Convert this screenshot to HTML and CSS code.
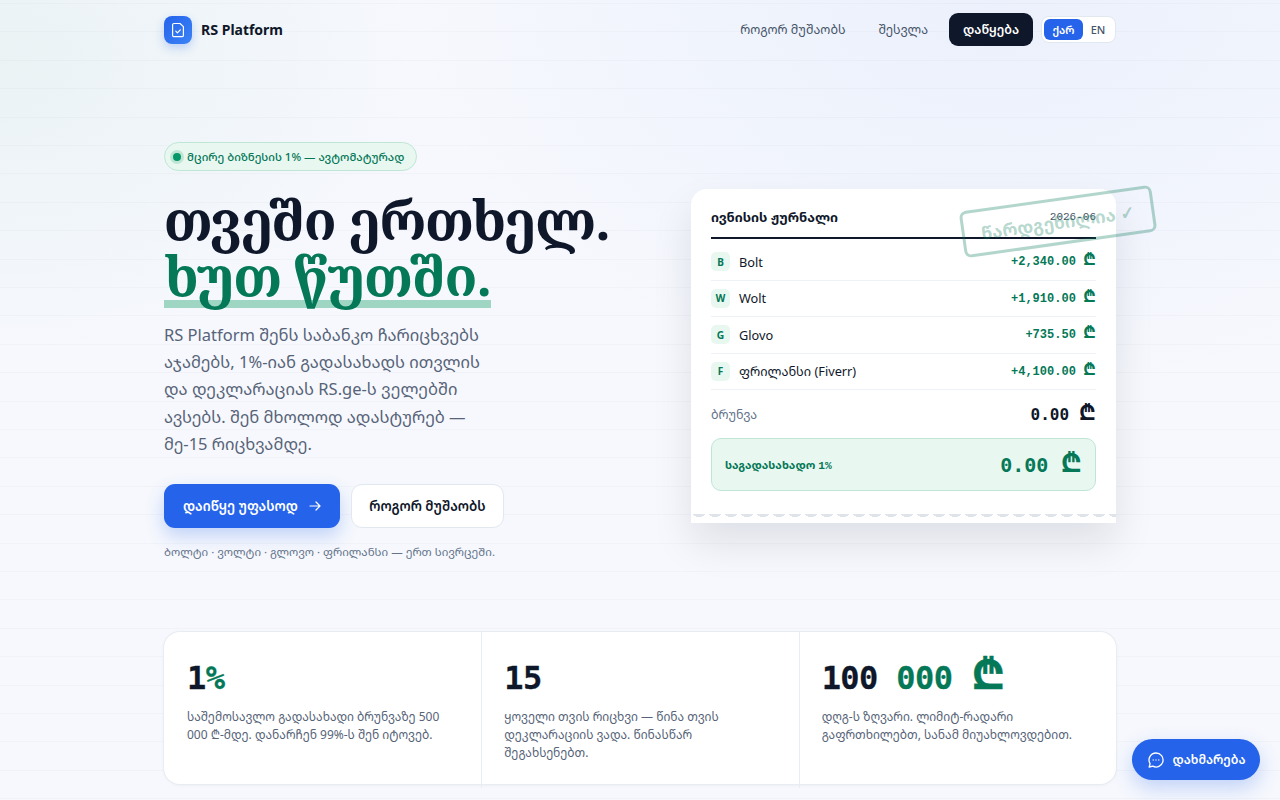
FILE: index.html
```html
<!DOCTYPE html>
<html lang="ka">
<head>
<meta charset="utf-8">
<title>RS Platform</title>
<link rel="stylesheet" href="styles.css">
</head>
<body>
<div class="page">
  <header class="nav">
    <a class="brand">
      <span class="logo"><svg width="14" height="16" viewBox="0 0 14 16" fill="none" stroke="#fff" stroke-width="1.2" stroke-linecap="round" stroke-linejoin="round"><path d="M3 1.5h6L12.4 4.6v9a1 1 0 0 1-1 1H2.6a1 1 0 0 1-1-1V2.8A1.3 1.3 0 0 1 3 1.5z"/><path d="M4.8 9.2l1.6 1.6 2.9-3"/></svg></span>
      <span class="brand-name">RS Platform</span>
    </a>
    <nav class="nav-right">
      <a class="nav-link">როგორ მუშაობს</a>
      <a class="nav-link">შესვლა</a>
      <a class="nav-cta">დაწყება</a>
      <div class="lang"><span class="lang-on">ქარ</span><span class="lang-off">EN</span></div>
    </nav>
  </header>

  <section class="hero">
    <div class="hero-left">
      <div class="eyebrow"><span class="dot"></span>მცირე ბიზნესის 1% — ავტომატურად</div>
      <h1>თვეში ერთხელ.<br><span class="accent">ხუთ წუთში.</span></h1>
      <p class="lead">RS Platform შენს საბანკო ჩარიცხვებს აჯამებს, 1%-იან გადასახადს ითვლის და დეკლარაციას RS.ge-ს ველებში ავსებს. შენ მხოლოდ ადასტურებ — მე-15 რიცხვამდე.</p>
      <div class="actions">
        <a class="btn-primary">დაიწყე უფასოდ<svg width="14" height="12" viewBox="0 0 14 12" fill="none" stroke="#fff" stroke-width="1.2" stroke-linecap="round" stroke-linejoin="round"><path d="M2 6h10M8 2l4 4-4 4"/></svg></a>
        <a class="btn-ghost">როგორ მუშაობს</a>
      </div>
      <p class="note">ბოლტი · ვოლტი · გლოვო · ფრილანსი — ერთ სივრცეში.</p>
    </div>

    <div class="receipt">
      <div class="receipt-head"><strong>ივნისის ჟურნალი</strong><span class="date">2026-06</span></div>
      <div class="rows">
        <div class="row"><span class="badge">B</span><span class="name">Bolt</span><span class="amt">+2,340.00 <span class="lari">₾</span></span></div>
        <div class="row"><span class="badge">W</span><span class="name">Wolt</span><span class="amt">+1,910.00 <span class="lari">₾</span></span></div>
        <div class="row"><span class="badge">G</span><span class="name">Glovo</span><span class="amt">+735.50 <span class="lari">₾</span></span></div>
        <div class="row"><span class="badge">F</span><span class="name">ფრილანსი (Fiverr)</span><span class="amt">+4,100.00 <span class="lari">₾</span></span></div>
      </div>
      <div class="total"><span class="total-label">ბრუნვა</span><span class="total-val">0.00 <span class="lari">₾</span></span></div>
      <div class="tax"><span class="tax-label">საგადასახადო <span class="mono">1%</span></span><span class="tax-val">0.00 <span class="lari">₾</span></span></div>
      <div class="perf"></div>
      <div class="stamp">წარდგენილია ✓</div>
    </div>
  </section>

  <section class="stats">
    <div class="stat"><div class="stat-num">1<span class="green">%</span></div><p>საშემოსავლო გადასახადი ბრუნვაზე 500 000 ₾-მდე. დანარჩენ 99%-ს შენ იტოვებ.</p></div>
    <div class="stat"><div class="stat-num">15</div><p>ყოველი თვის რიცხვი — წინა თვის დეკლარაციის ვადა. წინასწარ შეგახსენებთ.</p></div>
    <div class="stat"><div class="stat-num">100 <span class="green">000 <span class="lari">₾</span></span></div><p>დღგ-ს ზღვარი. ლიმიტ-რადარი გაფრთხილებთ, სანამ მიუახლოვდებით.</p></div>
  </section>
</div>
<a class="help"><svg width="18" height="18" viewBox="0 0 18 18" fill="none" stroke="#fff" stroke-width="1.3" stroke-linecap="round" stroke-linejoin="round"><path d="M9 2a7 7 0 1 1-3.2 13.2L2.2 16l.9-3.3A7 7 0 0 1 9 2z"/><path d="M6.2 9h.01M9 9h.01M11.8 9h.01"/></svg>დახმარება</a>
</body>
</html>
```
FILE: styles.css
```css
* { box-sizing: border-box; }
html, body { margin: 0; height: 100%; }
body {
  width: 1280px; height: 800px; overflow: hidden; position: relative;
  font-family: "Noto Sans Georgian", "Noto Sans", sans-serif;
  color: #0f172a;
  background:
    radial-gradient(420px 300px at 0 60px, rgba(16,140,90,.05), transparent 100%),
    radial-gradient(600px 400px at 1000px 0, rgba(37,99,235,.05), transparent 100%),
    repeating-linear-gradient(180deg, transparent 0 3px, rgba(15,23,42,.022) 3px 4px, transparent 4px 28.4px),
    #f6f8fd;
}
.page { width: 952px; margin: 0 auto; }
.nav { height: 59px; display: flex; align-items: center; justify-content: space-between; }
.brand { display: flex; align-items: center; gap: 9px; }
.logo { width: 28px; height: 28px; border-radius: 8px; background: linear-gradient(135deg,#2563eb,#3b82f6); display: flex; align-items: center; justify-content: center; box-shadow: 0 4px 10px rgba(37,99,235,.25); }
.brand-name { font-weight: 700; font-size: 14px; }
.nav-right { display: flex; align-items: center; }
.nav-link { font-size: 12.5px; color: #475569; margin-right: 33px; }
.nav-cta { background: #0f172a; color: #fff; font-weight: 600; font-size: 12.5px; height: 33px; width: 84px; justify-content: center; border-radius: 9px; display: flex; align-items: center; margin-left: -12px; }
.lang { margin-left: 8px; height: 27px; padding: 2px; display: flex; align-items: center; background: #fff; border: 1px solid #e2e8f0; border-radius: 8px; font-size: 11px; font-weight: 600; }
.lang-on { background: #2563eb; color: #fff; border-radius: 6px; height: 21px; width: 39px; display: flex; align-items: center; justify-content: center; }
.lang-off { color: #475569; width: 30px; text-align: center; font-weight: 500; }
.hero { display: flex; justify-content: space-between; align-items: flex-start; margin-top: 83px; }
.hero-left { width: 460px; }
.eyebrow { display: inline-flex; align-items: center; height: 29px; padding: 0 12px 0 5.5px; font-size: 11.4px; font-weight: 500; color: #047857; background: #e9f7f1; border: 1px solid #bfe6d5; border-radius: 15px; gap: 4.5px; }
.dot { width: 8px; height: 8px; margin: 0 2px; border-radius: 50%; background: #059669; box-shadow: 0 0 0 3px #bfe6d5; }
h1 { margin: 20px 0 0; font-family: "Noto Serif Georgian", serif; font-weight: 700; font-size: 54px; line-height: 56px; letter-spacing: -1px; white-space: nowrap; }
.accent { color: #047857; display: inline-block; padding-bottom: 7px; margin-bottom: -7px; background: linear-gradient(#9fd6c3,#9fd6c3) no-repeat 0 calc(100% - 2px) / 100% 8px; }
.lead { margin: 18px 0 0; width: 340px; font-size: 16.5px; line-height: 27.2px; color: #566378; }
.actions { display: flex; gap: 11px; margin-top: 26.6px; }
.btn-primary, .btn-ghost { height: 44px; border-radius: 11px; display: flex; align-items: center; font-size: 13.4px; font-weight: 600; }
.btn-primary { background: #2563eb; color: #fff; padding: 0 18px 0 19px; gap: 10px; box-shadow: 0 8px 18px rgba(37,99,235,.25); }
.btn-ghost { background: #fff; border: 1px solid #e2e8f0; padding: 0 17.5px; }
.note { margin: 16px 0 0; font-size: 11.5px; color: #64748b; }
.receipt { position: relative; width: 425px; margin-top: 47px; background: #fff; border-radius: 16px 16px 0 0; padding: 20px 20px 32px; box-shadow: 0 20px 40px rgba(15,23,42,.10); }
.receipt-head { display: flex; justify-content: space-between; align-items: center; height: 30px; padding-bottom: 12px; border-bottom: 2px solid #0f172a; font-size: 13.2px; line-height: 16px; }
.date { font-family: "Liberation Mono", monospace; font-size: 11px; color: #475569; }
.rows { padding-top: 5px; }
.row { display: flex; align-items: center; height: 36.5px; border-bottom: 1px solid #eef1f6; font-size: 12.75px; }
.badge { width: 19px; height: 19px; border-radius: 5px; background: #e9f7f1; color: #047857; font-size: 10px; font-weight: 700; display: flex; align-items: center; justify-content: center; margin-right: 9px; }
.name { flex: 1; }
.amt { font-family: "Liberation Mono", monospace; font-size: 12px; color: #047857; font-weight: 700; padding-top: 1px; }
.total { display: flex; justify-content: space-between; align-items: center; height: 48px; }
.total-label { font-size: 12.5px; color: #64748b; }
.total-val { font-family: "DejaVu Sans Mono", monospace; font-weight: 700; font-size: 16px; }
.tax { display: flex; justify-content: space-between; align-items: center; height: 53px; padding: 0 13px; background: #e9f7f1; border: 1px solid #bfe6d5; border-radius: 10px; color: #047857; }
.tax-label { font-size: 11.2px; font-weight: 700; }
.mono { font-family: "Liberation Mono", monospace; }
.tax-val { font-family: "DejaVu Sans Mono", monospace; font-weight: 700; font-size: 20px; }
.lari { font-family: Inter, "DejaVu Sans", sans-serif; font-weight: 700; font-size: 1.42em; line-height: 0; }
.perf { position: absolute; left: 0; right: 0; bottom: 5px; height: 4px; background: radial-gradient(ellipse 6px 3px at 8px 0, #dfe3ea 95%, transparent 100%) 0 0 / 16px 4px repeat-x; }
.stamp { position: absolute; left: 270px; top: 9px; width: 194px; height: 47px; border: 3px solid rgba(4,120,87,.3); border-radius: 7px; color: rgba(4,120,87,.3); font-weight: 700; font-size: 17.5px; display: flex; align-items: center; justify-content: center; transform: rotate(-8deg); white-space: nowrap; }
.stats { display: grid; grid-template-columns: repeat(3, 1fr); margin-top: 73px; height: 152px; background: #fff; border-radius: 16px; box-shadow: 0 0 0 1px #e8ecf3, 0 1px 4px rgba(15,23,42,.05); }
.stat { padding: 26px 23px; border-left: 1px solid #e8ecf3; }
.stat + .stat { padding-left: 22px; }
.stat:first-child { border-left: 0; }
.stat-num { font-family: "DejaVu Sans Mono", monospace; font-weight: 700; font-size: 32px; line-height: 40px; letter-spacing: -.6px; white-space: nowrap; -webkit-text-stroke: .3px currentColor; }
.green { color: #047857; }
.stat p { margin: 10px 0 0; font-size: 12px; line-height: 18px; color: #566378; }
.help { position: absolute; left: 1132px; top: 739px; width: 128px; height: 41px; background: #2563eb; color: #fff; border-radius: 21px; display: flex; align-items: center; justify-content: center; gap: 8px; font-size: 12.4px; font-weight: 600; box-shadow: 0 8px 20px rgba(37,99,235,.25); }
```
